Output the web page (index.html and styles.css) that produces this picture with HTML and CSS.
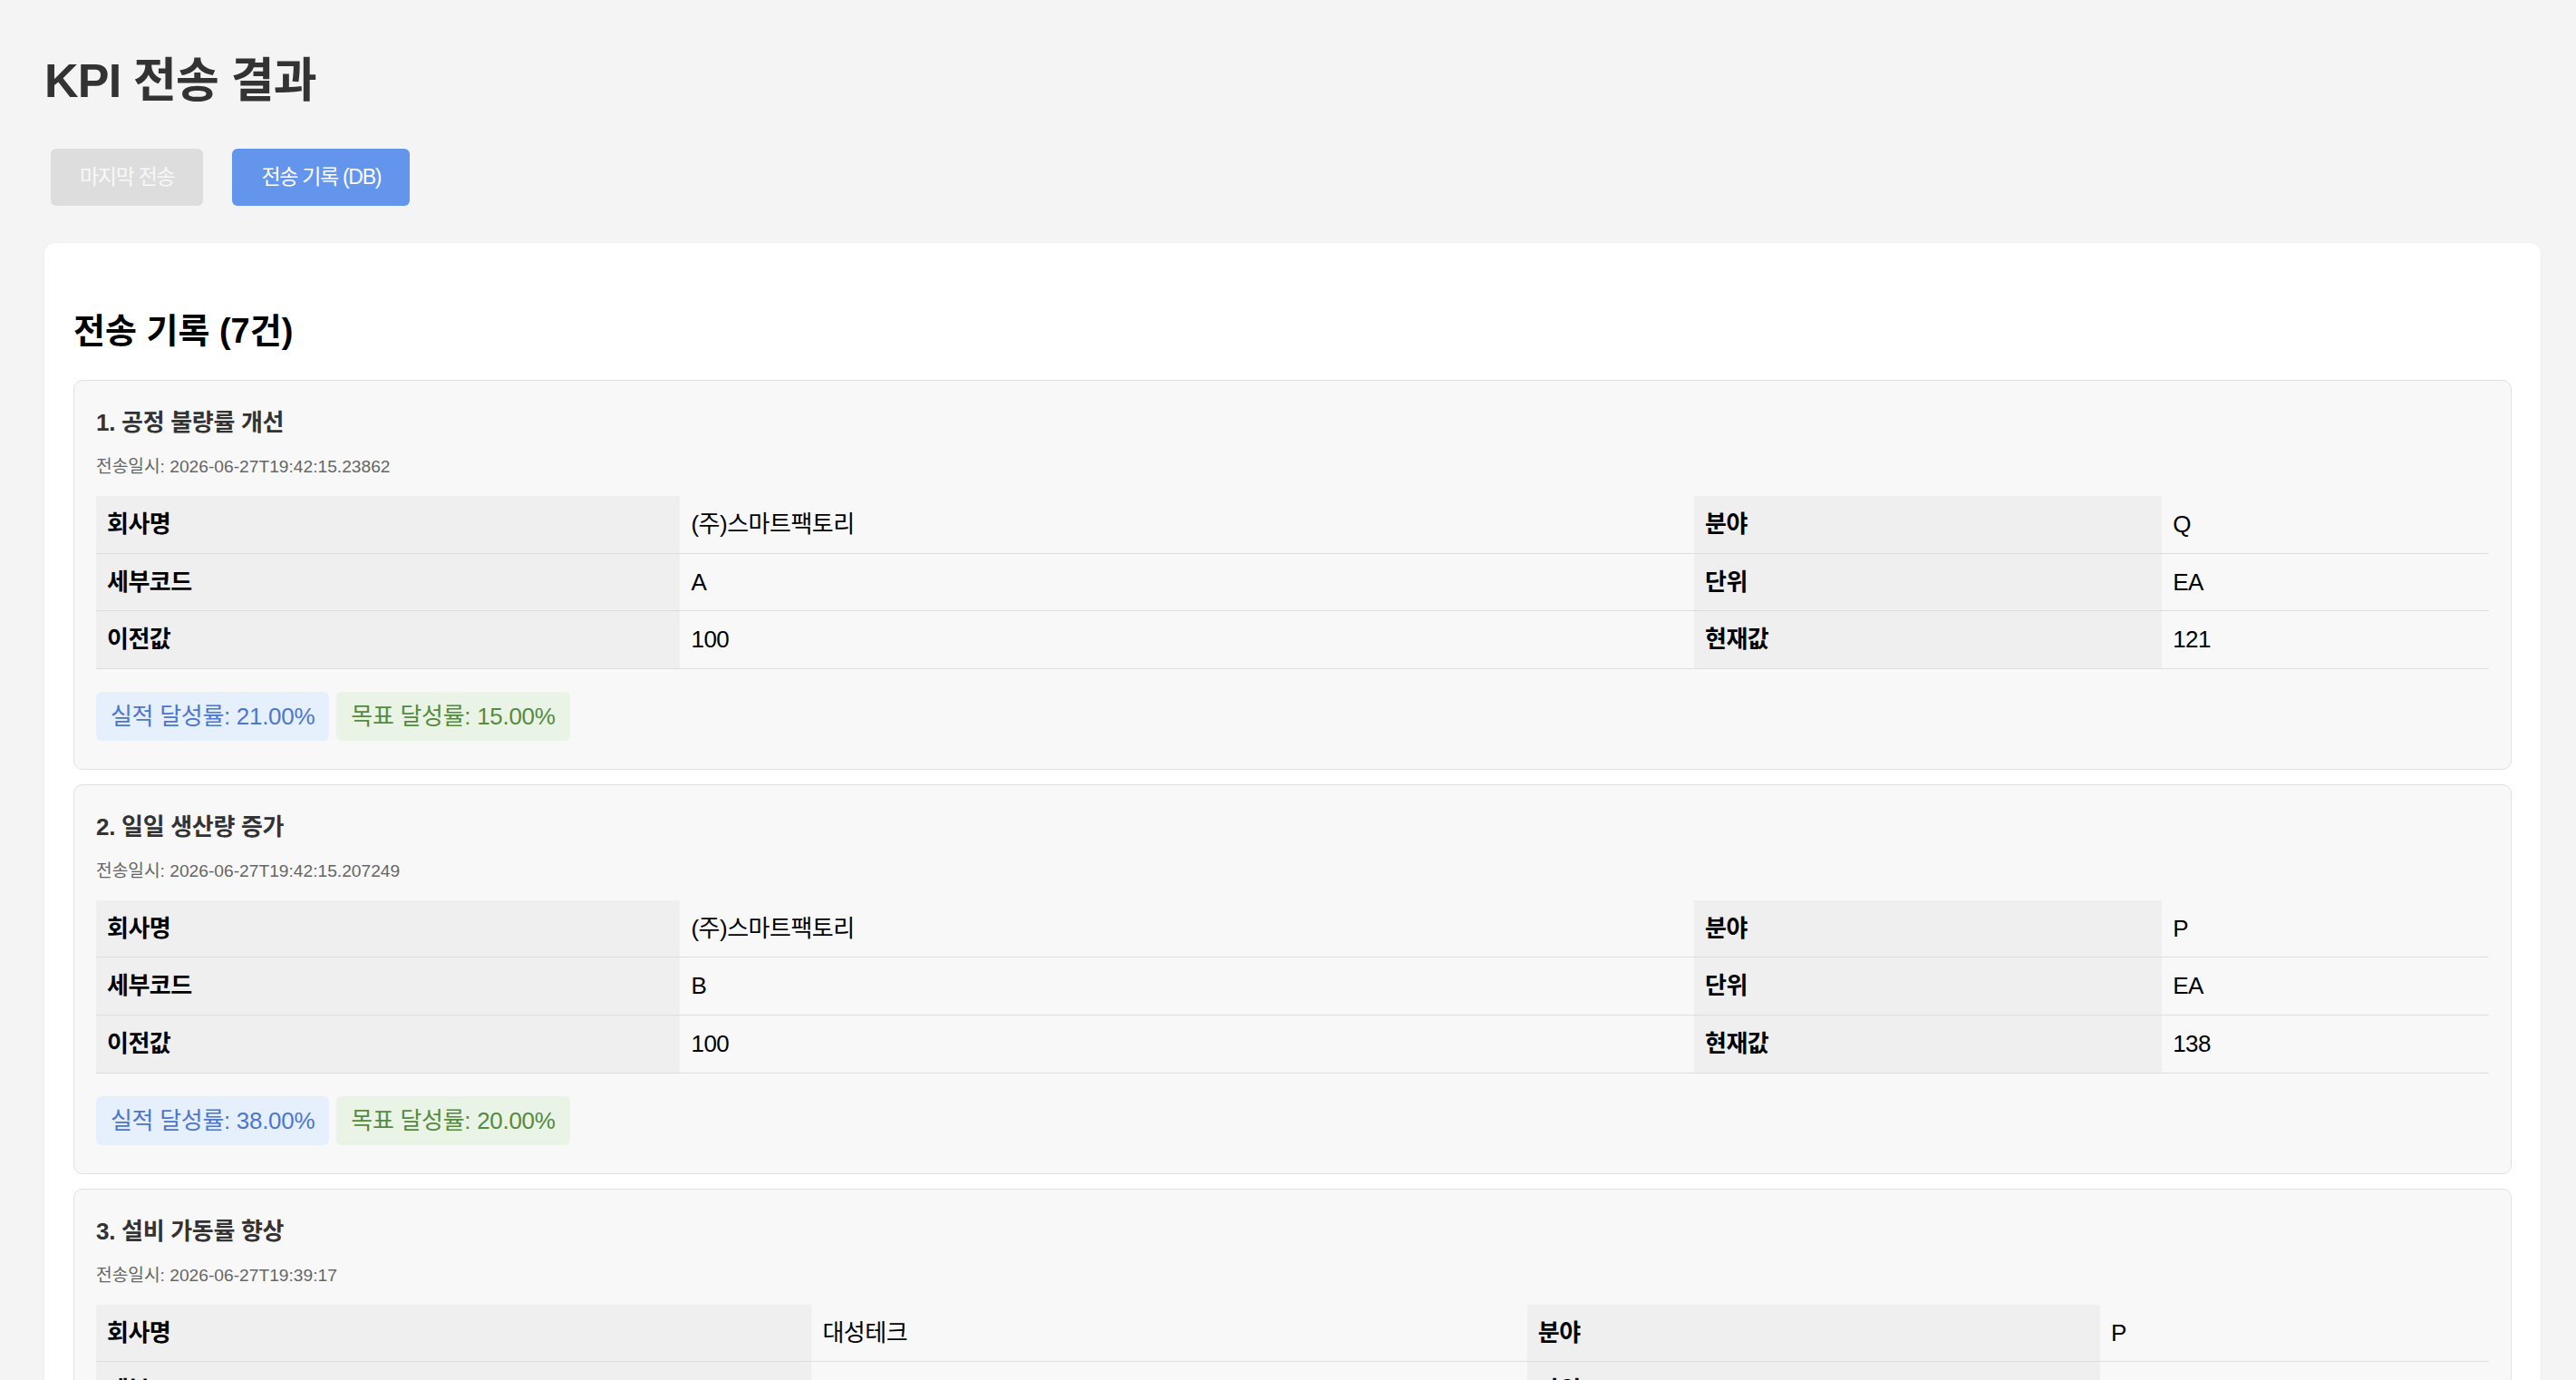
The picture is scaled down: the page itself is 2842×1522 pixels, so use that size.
FILE: index.html
```html
<!DOCTYPE html>
<html lang="ko">
  <head>
    <title>KPI 전송 결과</title>
    <meta charset="utf-8" />
    <meta name="viewport" content="width=device-width, initial-scale=1.0" />
    <link rel="stylesheet" href="styles.css">
  </head>

  <body>
    <div class="page">
      <h1 class="page-title">KPI 전송 결과</h1>

      <div class="tabs">
        <button class="tab" disabled>마지막 전송</button>
        <button class="tab active">전송 기록 (DB)</button>
      </div>

      <div class="panel">
        <h2 class="panel-title">전송 기록 (7건)</h2>

        <div class="record">
          <h3 class="record-title">1. 공정 불량률 개선</h3>
          <p class="record-date">전송일시: 2026-06-27T19:42:15.23862</p>
          <table class="record-table">
            <tr><th>회사명</th><td>(주)스마트팩토리</td><th>분야</th><td>Q</td></tr>
            <tr><th>세부코드</th><td>A</td><th>단위</th><td>EA</td></tr>
            <tr><th>이전값</th><td>100</td><th>현재값</th><td>121</td></tr>
          </table>
          <div class="rates">
            <span class="rate rate-actual">실적 달성률: 21.00%</span>
            <span class="rate rate-target">목표 달성률: 15.00%</span>
          </div>
        </div>

        <div class="record">
          <h3 class="record-title">2. 일일 생산량 증가</h3>
          <p class="record-date">전송일시: 2026-06-27T19:42:15.207249</p>
          <table class="record-table">
            <tr><th>회사명</th><td>(주)스마트팩토리</td><th>분야</th><td>P</td></tr>
            <tr><th>세부코드</th><td>B</td><th>단위</th><td>EA</td></tr>
            <tr><th>이전값</th><td>100</td><th>현재값</th><td>138</td></tr>
          </table>
          <div class="rates">
            <span class="rate rate-actual">실적 달성률: 38.00%</span>
            <span class="rate rate-target">목표 달성률: 20.00%</span>
          </div>
        </div>

        <div class="record">
          <h3 class="record-title">3. 설비 가동률 향상</h3>
          <p class="record-date">전송일시: 2026-06-27T19:39:17</p>
          <table class="record-table">
            <tr><th>회사명</th><td>대성테크</td><th>분야</th><td>P</td></tr>
            <tr><th>세부코드</th><td>C</td><th>단위</th><td>%</td></tr>
            <tr><th>이전값</th><td>100</td><th>현재값</th><td>112</td></tr>
          </table>
          <div class="rates">
            <span class="rate rate-actual">실적 달성률: 12.00%</span>
            <span class="rate rate-target">목표 달성률: 10.00%</span>
          </div>
        </div>
      </div>
    </div>
  </body>
</html>
```

FILE: styles.css
```css
body {
  margin: 0;
  font-family: "Liberation Sans", Arial, "Noto Sans CJK KR", sans-serif;
  background-color: #f4f4f4;
  color: #000;
}

.page {
  padding: 0 39px 40px 49px;
}

.page-title {
  margin: 0;
  padding-top: 59px;
  font-size: 52px;
  line-height: 60px;
  letter-spacing: -0.8px;
  color: #333;
}

.tabs {
  display: flex;
  gap: 32px;
  margin: 45px 0 41px 7px;
}

.tab {
  padding: 16px 32px;
  border: none;
  border-radius: 6px;
  font-family: inherit;
  font-size: 23px;
  line-height: 31px;
  letter-spacing: -1.3px;
  color: #fff;
  background-color: #6495ed;
  cursor: pointer;
}

.tab:disabled {
  background-color: #dddddd;
  color: #f8f8f8;
  cursor: default;
}

.panel {
  padding: 32px;
  background-color: #fff;
  border-radius: 12px;
  box-shadow: 0 1px 4px rgba(0, 0, 0, 0.04);
}

.panel-title {
  margin: 42px 0 31px;
  font-size: 38px;
  line-height: 46px;
}

.record {
  margin-bottom: 16px;
  padding: 28px 24px 31px;
  background-color: #f8f8f8;
  border: 1px solid #e0e0e0;
  border-radius: 10px;
}

.record-title {
  margin: 0;
  font-size: 26px;
  line-height: 36px;
  letter-spacing: -0.3px;
  color: #333;
}

.record-date {
  margin: 17px 0 18px;
  font-size: 19.2px;
  line-height: 28px;
  color: #666;
}

.record-table {
  width: 100%;
  border-collapse: collapse;
  font-size: 26px;
  line-height: 38.6px;
  letter-spacing: -0.5px;
}

.record-table th,
.record-table td {
  padding: 12px;
  text-align: left;
  border-bottom: 1px solid #dddddd;
}

.record-table th {
  background-color: #efefef;
  font-weight: bold;
}

.rates {
  display: flex;
  gap: 8px;
  margin-top: 25px;
}

.rate {
  padding: 8px 16px;
  border-radius: 6px;
  font-size: 26px;
  line-height: 38px;
  letter-spacing: -0.3px;
}

.rate-actual {
  background-color: #e6f0fc;
  color: #4d76d1;
}

.rate-target {
  background-color: #e9f4e7;
  color: #558b3f;
}
```
